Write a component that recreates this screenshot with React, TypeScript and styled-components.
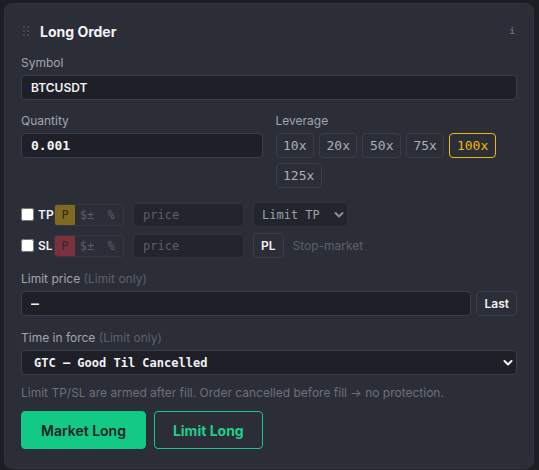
import React, { useState } from 'react';
import styled, { createGlobalStyle } from 'styled-components';

const GlobalStyle = createGlobalStyle`
  html, body {
    margin: 0;
    padding: 0;
    background: #1d1e23;
  }
  body {
    font-family: Inter, "Noto Sans", "Liberation Sans", sans-serif;
    -webkit-font-smoothing: antialiased;
  }
  * { box-sizing: border-box; }
`;

const mono = `"DejaVu Sans Mono", "Liberation Mono", monospace`;

const Page = styled.div`
  padding: 3px 5px 4px 4px;
`;

const Card = styled.section`
  width: 530px;
  background: #2b2e37;
  border: 1px solid #30333d;
  border-radius: 8px;
  padding: 15px 16px 19px 16px;
  display: flex;
  flex-direction: column;
`;

const Header = styled.div`
  display: flex;
  align-items: center;
  height: 24px;
  gap: 11px;
  padding-left: 2px;
`;

const Handle = styled.div`
  display: grid;
  grid-template-columns: repeat(2, 2px);
  grid-auto-rows: 2px;
  gap: 2px 2px;
  span {
    background: #4a4f5c;
    border-radius: 1px;
  }
`;

const Title = styled.h2`
  margin: 0;
  flex: 1;
  font-size: 14px;
  font-weight: 700;
  color: #f2f3f5;
`;

const Info = styled.span`
  font-family: ${mono};
  font-size: 9px;
  font-weight: 700;
  color: #666b77;
  margin-right: 2px;
`;

const Field = styled.div<{ $mt: number }>`
  display: flex;
  flex-direction: column;
  margin-top: ${(p) => p.$mt}px;
  min-width: 0;
`;

const Label = styled.label`
  font-size: 12px;
  line-height: 16px;
  color: #a1a5ae;
  margin-bottom: 4px;
  span {
    color: #5b606b;
  }
`;

const TextInput = styled.input<{ $mono?: boolean }>`
  height: 25px;
  width: 100%;
  background: #1f2027;
  border: 1px solid #3a3e4a;
  border-radius: 4px;
  color: #f1f2f4;
  padding: 0 9px;
  font-family: ${(p) => (p.$mono ? mono : 'Inter, "Noto Sans", sans-serif')};
  font-size: ${(p) => (p.$mono ? '13px' : '12px')};
  font-weight: 600;
  outline: none;
`;

const TwoCol = styled.div`
  display: grid;
  grid-template-columns: 1fr 1fr;
  column-gap: 13px;
  margin-top: 13px;
`;

const LevList = styled.div`
  display: flex;
  flex-wrap: wrap;
  gap: 5px;
`;

const LevButton = styled.button<{ $active: boolean }>`
  height: 25px;
  padding: 0 6.5px;
  background: transparent;
  border: 1px solid ${(p) => (p.$active ? '#f0b90b' : '#3a3e4a')};
  border-radius: 4px;
  color: ${(p) => (p.$active ? '#f0b90b' : '#a9aeb8')};
  font-family: ${mono};
  font-size: 13px;
  cursor: pointer;
`;

const Row = styled.div<{ $mt: number }>`
  display: flex;
  align-items: center;
  gap: 9px;
  margin-top: ${(p) => p.$mt}px;
  height: 25px;
`;

const Check = styled.label`
  display: flex;
  align-items: center;
  color: #f1f2f4;
  font-size: 12px;
  input {
    width: 13px;
    height: 13px;
    margin: 0 4px 0 0;
  }
  b {
    width: 14px;
    margin-right: 2px;
    font-weight: 600;
  }
`;

const Segments = styled.div`
  display: flex;
  height: 22px;
  border: 1px solid #343844;
  border-radius: 3px;
  overflow: hidden;
`;

const Segment = styled.span<{ $fill?: string }>`
  display: flex;
  align-items: center;
  justify-content: center;
  width: ${(p) => (p.$fill ? '20px' : '24px')};
  background: ${(p) => p.$fill ?? 'transparent'};
  color: ${(p) => (p.$fill ? '#2c2a26' : '#585d69')};
  font-family: ${mono};
  font-size: 12px;
  font-weight: 400;
`;

const PriceInput = styled.input`
  width: 111px;
  height: 24px;
  background: #23252c;
  border: 1px solid #30333d;
  border-radius: 4px;
  padding: 0 9px;
  color: #e5e7eb;
  font-family: ${mono};
  font-size: 12px;
  outline: none;
  &::placeholder {
    color: #5a5f6b;
  }
`;

const SelectWrap = styled.div<{ $width?: number }>`
  position: relative;
  width: ${(p) => (p.$width ? `${p.$width}px` : '100%')};
  svg {
    position: absolute;
    right: 4px;
    top: 50%;
    transform: translateY(-50%);
    pointer-events: none;
  }
`;

const Select = styled.select<{ $dim?: boolean }>`
  appearance: none;
  width: 100%;
  height: 25px;
  background: ${(p) => (p.$dim ? '#23252c' : '#1f2027')};
  border: 1px solid ${(p) => (p.$dim ? '#30333d' : '#3a3e4a')};
  border-radius: 4px;
  padding: 0 ${(p) => (p.$dim ? '8px' : '12px')};
  color: ${(p) => (p.$dim ? '#9ba0aa' : '#f1f2f4')};
  font-family: ${mono};
  font-size: 12px;
  font-weight: ${(p) => (p.$dim ? 400 : 600)};
  outline: none;
`;

const SmallButton = styled.button`
  height: 25px;
  padding: 0 7px;
  background: transparent;
  border: 1px solid #3a3e4a;
  border-radius: 4px;
  color: #f1f2f4;
  font-family: Inter, "Noto Sans", sans-serif;
  font-size: 12px;
  font-weight: 600;
  flex-shrink: 0;
`;

const Muted = styled.span`
  font-size: 12px;
  color: #5b606b;
`;

const InputRow = styled.div`
  display: flex;
  gap: 5px;
`;

const Note = styled.p`
  margin: 10px 0 0;
  font-size: 12px;
  line-height: 16px;
  color: #6b707c;
`;

const Actions = styled.div`
  display: flex;
  gap: 8px;
  margin-top: 10px;
`;

const ActionButton = styled.button<{ $solid?: boolean }>`
  height: 38px;
  padding: 0 ${(p) => (p.$solid ? '19px' : '18px')};
  border-radius: 4px;
  border: 1px solid #12c985;
  background: ${(p) => (p.$solid ? '#12c985' : 'transparent')};
  color: ${(p) => (p.$solid ? '#1b1e24' : '#1ed08b')};
  font-family: Inter, "Noto Sans", sans-serif;
  font-size: 14px;
  font-weight: ${(p) => (p.$solid ? 600 : 700)};
  cursor: pointer;
`;

const Chevron = ({ color }: { color: string }) => (
  <svg width="10" height="7" viewBox="0 0 10 7">
    <path d="M1.5 1.5 5 5l3.5-3.5" fill="none" stroke={color} strokeWidth="2" strokeLinecap="round" strokeLinejoin="round" />
  </svg>
);

const leverages = [10, 20, 50, 75, 100, 125];

export default function App() {
  const [leverage, setLeverage] = useState(100);

  return (
    <Page>
      <GlobalStyle />
      <Card>
        <Header>
          <Handle>
            {Array.from({ length: 6 }).map((_, i) => (
              <span key={i} />
            ))}
          </Handle>
          <Title>Long Order</Title>
          <Info>i</Info>
        </Header>

        <Field $mt={12}>
          <Label>Symbol</Label>
          <TextInput defaultValue="BTCUSDT" />
        </Field>

        <TwoCol>
          <Field $mt={0}>
            <Label>Quantity</Label>
            <TextInput $mono defaultValue="0.001" />
          </Field>
          <Field $mt={0}>
            <Label>Leverage</Label>
            <LevList>
              {leverages.map((l) => (
                <LevButton key={l} $active={l === leverage} onClick={() => setLeverage(l)}>
                  {l}x
                </LevButton>
              ))}
            </LevList>
          </Field>
        </TwoCol>

        <Row $mt={14}>
          <Check>
            <input type="checkbox" />
            <b>TP</b>
            <Segments>
              <Segment $fill="#7f6a20">P</Segment>
              <Segment>$±</Segment>
              <Segment>%</Segment>
            </Segments>
          </Check>
          <PriceInput placeholder="price" />
          <SelectWrap $width={95}>
            <Select $dim defaultValue="limit">
              <option value="limit">Limit TP</option>
              <option value="market">Market TP</option>
            </Select>
            <Chevron color="#8a8f9a" />
          </SelectWrap>
        </Row>

        <Row $mt={6}>
          <Check>
            <input type="checkbox" />
            <b>SL</b>
            <Segments>
              <Segment $fill="#7b3140">P</Segment>
              <Segment>$±</Segment>
              <Segment>%</Segment>
            </Segments>
          </Check>
          <PriceInput placeholder="price" />
          <SmallButton>PL</SmallButton>
          <Muted>Stop-market</Muted>
        </Row>

        <Field $mt={13}>
          <Label>
            Limit price <span>(Limit only)</span>
          </Label>
          <InputRow>
            <TextInput $mono defaultValue="—" />
            <SmallButton>Last</SmallButton>
          </InputRow>
        </Field>

        <Field $mt={14}>
          <Label>
            Time in force <span>(Limit only)</span>
          </Label>
          <SelectWrap>
            <Select defaultValue="gtc">
              <option value="gtc">GTC — Good Til Cancelled</option>
              <option value="ioc">IOC — Immediate Or Cancel</option>
              <option value="fok">FOK — Fill Or Kill</option>
            </Select>
            <Chevron color="#f1f2f4" />
          </SelectWrap>
        </Field>

        <Note>Limit TP/SL are armed after fill. Order cancelled before fill → no protection.</Note>

        <Actions>
          <ActionButton $solid>Market Long</ActionButton>
          <ActionButton>Limit Long</ActionButton>
        </Actions>
      </Card>
    </Page>
  );
}
